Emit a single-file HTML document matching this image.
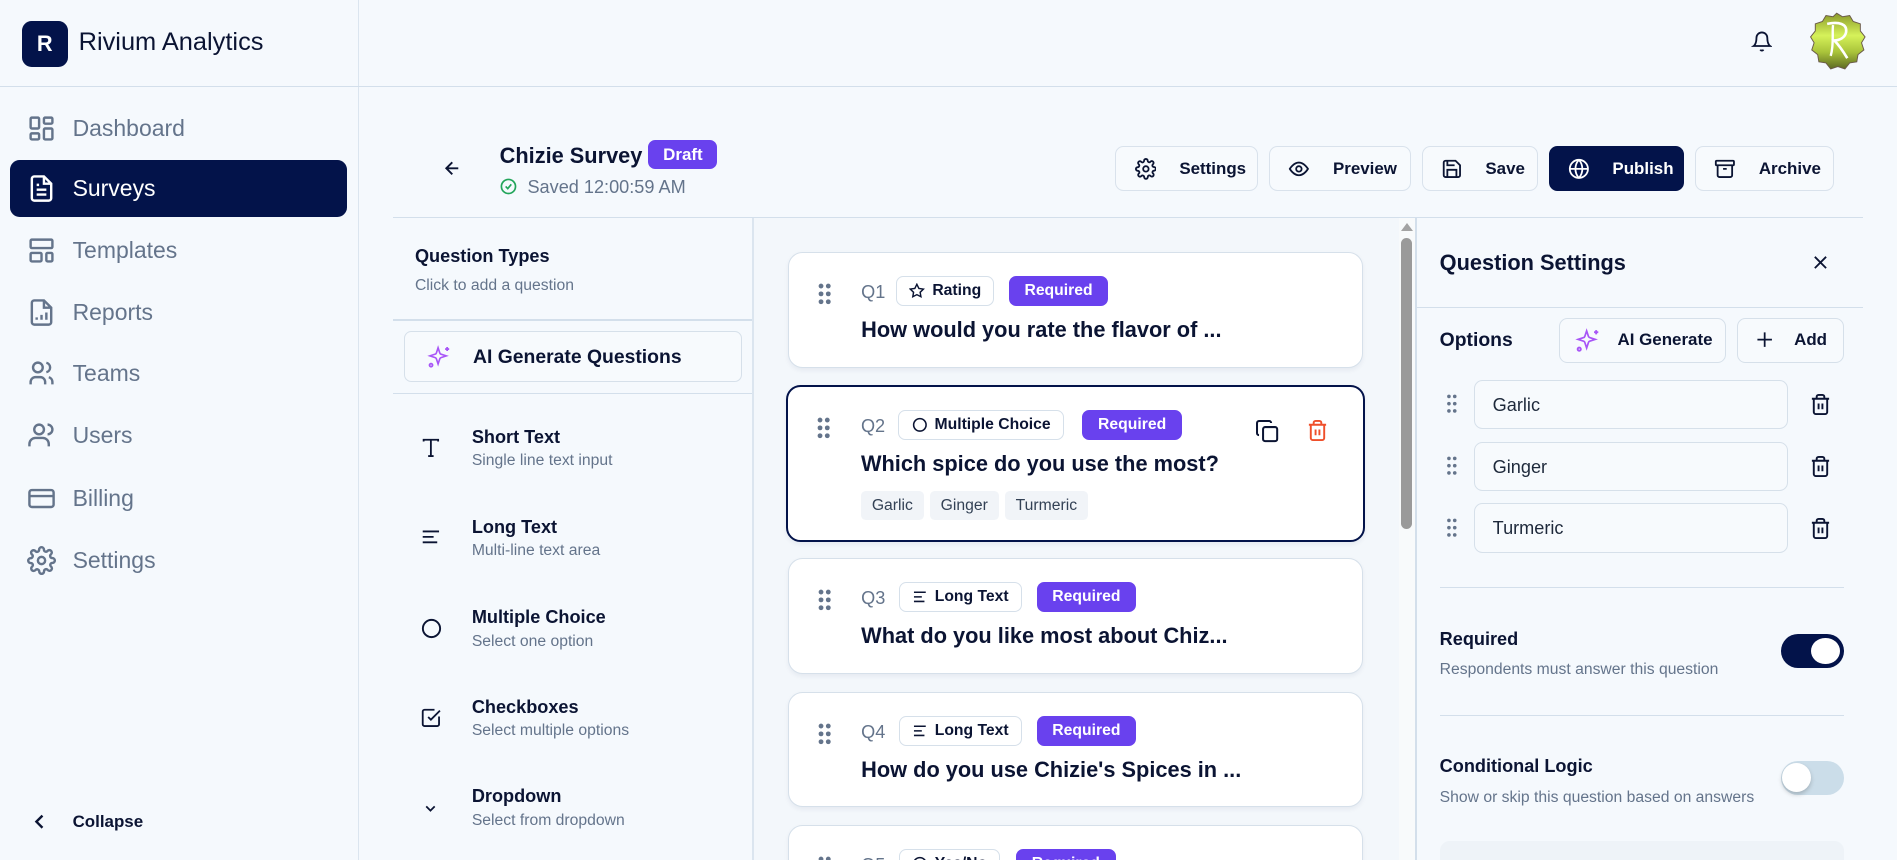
<!DOCTYPE html>
<html><head><meta charset="utf-8"><style>
*{box-sizing:border-box;margin:0;padding:0}
html,body{width:1897px;height:860px;overflow:hidden;background:#f5f9fd}
#r{zoom:1.2098;width:1568px;height:711px;position:relative;overflow:hidden;font-family:"Liberation Sans",sans-serif;color:#0b1433;background:#f5f9fd}
.a{position:absolute}
svg{display:block}
.nav{position:absolute;left:22px;display:flex;align-items:center;font-size:19px;color:#64748b}
.nav svg{margin-right:14px}
.btn{position:absolute;top:121px;height:37px;border:1px solid #d9e2ec;border-radius:7px;background:#f7fafd;display:flex;align-items:center;padding-left:15px;font-size:14px;font-weight:bold;color:#0b1433}
.btn svg{margin-right:19px}
.qt{position:absolute;left:347px}
.qt .t{position:absolute;left:43px;top:-17px;font-size:15px;font-weight:bold;white-space:nowrap}
.qt .s{position:absolute;left:43px;top:4px;font-size:13px;color:#64748b;white-space:nowrap}
.card{position:absolute;left:651px;width:476px;background:#fff;border:1px solid #d6e0ea;border-radius:12px;box-shadow:0 2px 4px rgba(15,40,80,.06)}
.dots{position:absolute;left:24px;top:25px}
.ql{position:absolute;left:60px;top:24px;font-size:15px;color:#64748b}
.tag{position:absolute;top:19px;height:25px;border:1px solid #d6e0ea;border-radius:6px;display:flex;align-items:center;padding:0 10px 0 10px;font-size:13px;font-weight:bold;white-space:nowrap}
.tag svg{margin-right:6px}
.req{position:absolute;top:19px;height:25px;background:#6941ee;color:#fff;border-radius:6px;font-size:13px;font-weight:bold;padding:0 13px;line-height:25px}
.qtitle{position:absolute;left:60px;top:53px;font-size:18px;font-weight:bold;white-space:nowrap}
.chip{display:inline-block;background:#f1f4f8;border-radius:4px;padding:0 9px;height:24px;line-height:24px;font-size:13px;color:#334155;margin-right:5px}
.inp{position:absolute;left:1218px;width:260px;height:41px;border:1px solid #d6e0ea;border-radius:7px;background:#f7fafd;font-size:15px;padding-left:15px;line-height:40px;color:#1e293b}
</style></head><body><div id="r">
<!-- sidebar -->
<div class="a" style="left:296px;top:0;width:1px;height:711px;background:#dbe5ef"></div>
<div class="a" style="left:0;top:71px;width:1568px;height:1px;background:#d3dfeb"></div>
<div class="a" style="left:18px;top:17px;width:38px;height:38px;background:#03134a;border-radius:8px;color:#fff;font-weight:bold;font-size:18px;text-align:center;line-height:38px">R</div>
<div class="a" style="left:65px;top:23px;font-size:21px;font-weight:500;color:#0b1433">Rivium Analytics</div>

<div class="nav" style="top:94px"><svg width="24" height="24" viewBox="0 0 24 24" fill="none" stroke="#64748b" stroke-width="2"><rect x="3" y="3" width="7" height="9" rx="1"/><rect x="14" y="3" width="7" height="5" rx="1"/><rect x="14" y="12" width="7" height="9" rx="1"/><rect x="3" y="16" width="7" height="5" rx="1"/></svg>Dashboard</div>
<div class="a" style="left:8px;top:132px;width:279px;height:47px;background:#03134a;border-radius:8px"></div>
<div class="nav" style="top:144px;color:#fff"><svg width="24" height="24" viewBox="0 0 24 24" fill="none" stroke="#fff" stroke-width="2"><path d="M14 2H6a2 2 0 0 0-2 2v16a2 2 0 0 0 2 2h12a2 2 0 0 0 2-2V8z"/><path d="M14 2v6h6M16 13H8M16 17H8M10 9H8"/></svg>Surveys</div>
<div class="nav" style="top:195px"><svg width="24" height="24" viewBox="0 0 24 24" fill="none" stroke="#64748b" stroke-width="2"><rect x="3" y="3" width="18" height="7" rx="1"/><rect x="3" y="14" width="9" height="7" rx="1"/><rect x="16" y="14" width="5" height="7" rx="1"/></svg>Templates</div>
<div class="nav" style="top:246px"><svg width="24" height="24" viewBox="0 0 24 24" fill="none" stroke="#64748b" stroke-width="2"><path d="M14 2H6a2 2 0 0 0-2 2v16a2 2 0 0 0 2 2h12a2 2 0 0 0 2-2V8z"/><path d="M14 2v6h6M8 18v-2M12 18v-4M16 18v-6"/></svg>Reports</div>
<div class="nav" style="top:297px"><svg width="24" height="24" viewBox="0 0 24 24" fill="none" stroke="#64748b" stroke-width="2"><circle cx="9" cy="7" r="4"/><path d="M3 21v-2a4 4 0 0 1 4-4h4a4 4 0 0 1 4 4v2M16 3.1a4 4 0 0 1 0 7.8M21 21v-2a4 4 0 0 0-3-3.9"/></svg>Teams</div>
<div class="nav" style="top:348px"><svg width="24" height="24" viewBox="0 0 24 24" fill="none" stroke="#64748b" stroke-width="2"><circle cx="10" cy="7" r="4"/><path d="M2 21v-2a5 5 0 0 1 5-5h6a5 5 0 0 1 5 5v2M17 3a4 4 0 0 1 0 8"/></svg>Users</div>
<div class="nav" style="top:400px"><svg width="24" height="24" viewBox="0 0 24 24" fill="none" stroke="#64748b" stroke-width="2"><rect x="2" y="5" width="20" height="14" rx="2"/><path d="M2 10h20"/></svg>Billing</div>
<div class="nav" style="top:451px"><svg width="24" height="24" viewBox="0 0 24 24" fill="none" stroke="#64748b" stroke-width="2"><circle cx="12" cy="12" r="3"/><path d="M19.4 15a1.7 1.7 0 0 0 .3 1.8l.1.1a2 2 0 1 1-2.8 2.8l-.1-.1a1.7 1.7 0 0 0-1.8-.3 1.7 1.7 0 0 0-1 1.5V21a2 2 0 1 1-4 0v-.1a1.7 1.7 0 0 0-1.1-1.5 1.7 1.7 0 0 0-1.8.3l-.1.1a2 2 0 1 1-2.8-2.8l.1-.1a1.7 1.7 0 0 0 .3-1.8 1.7 1.7 0 0 0-1.5-1H3a2 2 0 1 1 0-4h.1a1.7 1.7 0 0 0 1.5-1.1 1.7 1.7 0 0 0-.3-1.8l-.1-.1a2 2 0 1 1 2.8-2.8l.1.1a1.7 1.7 0 0 0 1.8.3H9a1.7 1.7 0 0 0 1-1.5V3a2 2 0 1 1 4 0v.1a1.7 1.7 0 0 0 1 1.5 1.7 1.7 0 0 0 1.8-.3l.1-.1a2 2 0 1 1 2.8 2.8l-.1.1a1.7 1.7 0 0 0-.3 1.8V9a1.7 1.7 0 0 0 1.5 1H21a2 2 0 1 1 0 4h-.1a1.7 1.7 0 0 0-1.5 1z"/></svg>Settings</div>
<div class="a" style="left:28px;top:671px"><svg width="10" height="16" viewBox="0 0 10 16" fill="none" stroke="#0b1433" stroke-width="2"><path d="M7 3L2 8l5 5"/></svg></div>
<div class="a" style="left:60px;top:671px;font-size:14px;font-weight:bold">Collapse</div>

<!-- top right -->
<div class="a" style="left:1447px;top:25px"><svg width="18" height="19" viewBox="0 0 24 24" fill="none" stroke="#0b1433" stroke-width="2"><path d="M6 8a6 6 0 0 1 12 0c0 7 3 9 3 9H3s3-2 3-9M10.3 21a1.9 1.9 0 0 0 3.4 0"/></svg></div>
<svg class="a" style="left:1494px;top:10px" width="49" height="49" viewBox="0 0 50 50"><defs><linearGradient id="gg" x1="0" y1="0" x2="0" y2="1"><stop offset="0" stop-color="#8a9a2a"/><stop offset=".4" stop-color="#d6f25a"/><stop offset=".7" stop-color="#a9c33a"/><stop offset="1" stop-color="#5d6a22"/></linearGradient></defs><path d="M25 1l5 3 6-1 3 5 6 2 0 6 4 5-3 5 2 6-5 4-1 6-6 1-4 5-6-2-6 2-4-5-6-1-1-6-5-4 2-6-3-5 4-5 0-6 6-2 3-5 6 1z" fill="url(#gg)" stroke="#6a5a4a" stroke-width=".8"/><path d="M17 10c10-2 17 0 16 7-1 5-6 7-10 7 4 4 8 10 11 15" fill="none" stroke="#fff" stroke-width="2.2"/><path d="M22 11c-1 6 1 16-2 26" fill="none" stroke="#fff" stroke-width="2"/></svg>

<!-- main panel -->
<div class="a" style="left:325px;top:179px;width:1215px;height:1px;background:#d3dfeb"></div>
<div class="a" style="left:365px;top:131px"><svg width="17" height="17" viewBox="0 0 24 24" fill="none" stroke="#0b1433" stroke-width="2.2"><path d="M19 12H5M12 19l-7-7 7-7"/></svg></div>
<div class="a" style="left:413px;top:118px;font-size:18px;font-weight:bold">Chizie Survey</div>
<div class="a" style="left:536px;top:116px;width:57px;height:24px;background:#6941ee;border-radius:6px;color:#fff;font-size:14px;font-weight:bold;text-align:center;line-height:24px">Draft</div>
<div class="a" style="left:413px;top:147px"><svg width="14" height="14" viewBox="0 0 24 24" fill="none" stroke="#22a55a" stroke-width="2.4"><circle cx="12" cy="12" r="10"/><path d="M8 12l3 3 5-6"/></svg></div>
<div class="a" style="left:436px;top:146px;font-size:15px;color:#64748b">Saved 12:00:59 AM</div>

<div class="btn" style="left:922px;width:118px"><svg width="18" height="18" viewBox="0 0 24 24" fill="none" stroke="#0b1433" stroke-width="2"><circle cx="12" cy="12" r="3"/><path d="M19.4 15a1.7 1.7 0 0 0 .3 1.8l.1.1a2 2 0 1 1-2.8 2.8l-.1-.1a1.7 1.7 0 0 0-1.8-.3 1.7 1.7 0 0 0-1 1.5V21a2 2 0 1 1-4 0v-.1a1.7 1.7 0 0 0-1.1-1.5 1.7 1.7 0 0 0-1.8.3l-.1.1a2 2 0 1 1-2.8-2.8l.1-.1a1.7 1.7 0 0 0 .3-1.8 1.7 1.7 0 0 0-1.5-1H3a2 2 0 1 1 0-4h.1a1.7 1.7 0 0 0 1.5-1.1 1.7 1.7 0 0 0-.3-1.8l-.1-.1a2 2 0 1 1 2.8-2.8l.1.1a1.7 1.7 0 0 0 1.8.3H9a1.7 1.7 0 0 0 1-1.5V3a2 2 0 1 1 4 0v.1a1.7 1.7 0 0 0 1 1.5 1.7 1.7 0 0 0 1.8-.3l.1-.1a2 2 0 1 1 2.8 2.8l-.1.1a1.7 1.7 0 0 0-.3 1.8V9a1.7 1.7 0 0 0 1.5 1H21a2 2 0 1 1 0 4h-.1a1.7 1.7 0 0 0-1.5 1z"/></svg>Settings</div>
<div class="btn" style="left:1049px;width:117px"><svg width="18" height="18" viewBox="0 0 24 24" fill="none" stroke="#0b1433" stroke-width="2"><path d="M2 12s4-7 10-7 10 7 10 7-4 7-10 7S2 12 2 12z"/><circle cx="12" cy="12" r="3"/></svg>Preview</div>
<div class="btn" style="left:1175px;width:96px"><svg width="18" height="18" viewBox="0 0 24 24" fill="none" stroke="#0b1433" stroke-width="2"><path d="M19 21H5a2 2 0 0 1-2-2V5a2 2 0 0 1 2-2h11l5 5v11a2 2 0 0 1-2 2z"/><path d="M17 21v-8H7v8M7 3v5h8"/></svg>Save</div>
<div class="btn" style="left:1280px;width:112px;background:#03134a;border-color:#03134a;color:#fff"><svg width="18" height="18" viewBox="0 0 24 24" fill="none" stroke="#fff" stroke-width="2"><circle cx="12" cy="12" r="10"/><path d="M2 12h20M12 2a15 15 0 0 1 0 20M12 2a15 15 0 0 0 0 20"/></svg>Publish</div>
<div class="btn" style="left:1401px;width:115px"><svg width="18" height="18" viewBox="0 0 24 24" fill="none" stroke="#0b1433" stroke-width="2"><rect x="2" y="3" width="20" height="5" rx="1"/><path d="M4 8v11a2 2 0 0 0 2 2h12a2 2 0 0 0 2-2V8M10 12h4"/></svg>Archive</div>

<!-- left column -->
<div class="a" style="left:622px;top:180px;width:1px;height:531px;background:#dbe5ef"></div>
<div class="a" style="left:343px;top:203px;font-size:15px;font-weight:bold">Question Types</div>
<div class="a" style="left:343px;top:229px;font-size:13px;color:#64748b">Click to add a question</div>
<div class="a" style="left:325px;top:264px;width:297px;height:1px;background:#d3dfeb"></div>
<div class="a" style="left:334px;top:274px;width:279px;height:42px;border:1px solid #d6e0ea;border-radius:6px;background:#f7fafd"></div>
<div class="a" style="left:353px;top:285px"><svg width="20" height="20" viewBox="0 0 24 24" fill="none" stroke="#a855f7" stroke-width="1.8"><path d="M10 3l1.9 5.8a2 2 0 0 0 1.3 1.3L19 12l-5.8 1.9a2 2 0 0 0-1.3 1.3L10 21l-1.9-5.8a2 2 0 0 0-1.3-1.3L1 12l5.8-1.9a2 2 0 0 0 1.3-1.3z" transform="translate(2 0) scale(.9)"/><path d="M20 2v4M22 4h-4"/><circle cx="4" cy="20" r="1.5"/></svg></div>
<div class="a" style="left:391px;top:286px;font-size:16px;font-weight:bold">AI Generate Questions</div>
<div class="a" style="left:325px;top:325px;width:297px;height:1px;background:#d3dfeb"></div>

<div class="qt" style="top:370px"><svg class="a" style="left:0;top:-9px" width="18" height="18" viewBox="0 0 24 24" fill="none" stroke="#0b1433" stroke-width="2"><path d="M4 5V3h16v2M12 3v18M9 21h6"/></svg><div class="t">Short Text</div><div class="s">Single line text input</div></div>
<div class="qt" style="top:444px"><svg class="a" style="left:0;top:-9px" width="18" height="18" viewBox="0 0 24 24" fill="none" stroke="#0b1433" stroke-width="2"><path d="M3 6h18M3 12h12M3 18h16"/></svg><div class="t">Long Text</div><div class="s">Multi-line text area</div></div>
<div class="qt" style="top:519px"><svg class="a" style="left:0;top:-9px" width="19" height="19" viewBox="0 0 24 24" fill="none" stroke="#0b1433" stroke-width="2"><circle cx="12" cy="12" r="9"/></svg><div class="t">Multiple Choice</div><div class="s">Select one option</div></div>
<div class="qt" style="top:593px"><svg class="a" style="left:0;top:-9px" width="18" height="18" viewBox="0 0 24 24" fill="none" stroke="#0b1433" stroke-width="2"><path d="M21 10.5V19a2 2 0 0 1-2 2H5a2 2 0 0 1-2-2V5a2 2 0 0 1 2-2h11"/><path d="M9 11l3 3L22 4"/></svg><div class="t">Checkboxes</div><div class="s">Select multiple options</div></div>
<div class="qt" style="top:667px"><svg class="a" style="left:2px;top:-6px" width="14" height="14" viewBox="0 0 24 24" fill="none" stroke="#0b1433" stroke-width="2.5"><path d="M6 9l6 6 6-6"/></svg><div class="t">Dropdown</div><div class="s">Select from dropdown</div></div>

<!-- middle -->
<div class="a" style="left:623px;top:180px;width:546px;height:531px;background:#f3f7fb"></div>
<div class="a" style="left:1156px;top:180px;width:14px;height:531px;background:#f8fafb"></div>
<div class="a" style="left:1158px;top:184px;width:0;height:0;border-left:5px solid transparent;border-right:5px solid transparent;border-bottom:7px solid #a3a3a3"></div>
<div class="a" style="left:1158px;top:197px;width:9px;height:240px;background:#9a9a9a;border-radius:5px"></div>
<div class="a" style="left:1170px;top:180px;width:1px;height:531px;background:#d3dfeb"></div>

<svg width="0" height="0" style="position:absolute"><defs><g id="dd" fill="#64748b"><circle cx="2.5" cy="2.5" r="2"/><circle cx="8.5" cy="2.5" r="2"/><circle cx="2.5" cy="9" r="2"/><circle cx="8.5" cy="9" r="2"/><circle cx="2.5" cy="15.5" r="2"/><circle cx="8.5" cy="15.5" r="2"/></g></defs></svg>

<div class="card" style="top:208px;height:96px">
<svg class="dots" width="11" height="18"><use href="#dd"/></svg>
<div class="ql">Q1</div>
<div class="tag" style="left:89px"><svg width="13" height="13" viewBox="0 0 24 24" fill="none" stroke="#0b1433" stroke-width="2.2"><path d="M12 2l3.1 6.3 6.9 1-5 4.9 1.2 6.8L12 17.8 5.8 21l1.2-6.8-5-4.9 6.9-1z"/></svg>Rating</div>
<div class="req" style="left:182px">Required</div>
<div class="qtitle">How would you rate the flavor of ...</div>
</div>

<div class="card" style="top:318px;height:130px;border:2px solid #03134a;left:650px;width:478px">
<svg class="dots" width="11" height="18"><use href="#dd"/></svg>
<div class="ql">Q2</div>
<div class="tag" style="left:91px"><svg width="13" height="13" viewBox="0 0 24 24" fill="none" stroke="#0b1433" stroke-width="2.4"><circle cx="12" cy="12" r="9.5"/></svg>Multiple Choice</div>
<div class="req" style="left:243px">Required</div>
<svg class="a" style="left:386px;top:27px" width="20" height="20" viewBox="0 0 24 24" fill="none" stroke="#0b1433" stroke-width="2"><rect x="8" y="8" width="14" height="14" rx="2"/><path d="M4 16c-1.1 0-2-.9-2-2V4c0-1.1.9-2 2-2h10c1.1 0 2 .9 2 2"/></svg>
<svg class="a" style="left:428px;top:27px" width="19" height="19" viewBox="0 0 24 24" fill="none" stroke="#ef4f2a" stroke-width="2"><path d="M3 6h18M19 6v14a2 2 0 0 1-2 2H7a2 2 0 0 1-2-2V6M8 6V4a2 2 0 0 1 2-2h4a2 2 0 0 1 2 2v2M10 11v6M14 11v6"/></svg>
<div class="qtitle">Which spice do you use the most?</div>
<div class="a" style="left:60px;top:86px;white-space:nowrap"><span class="chip">Garlic</span><span class="chip">Ginger</span><span class="chip">Turmeric</span></div>
</div>

<div class="card" style="top:461px;height:96px">
<svg class="dots" width="11" height="18"><use href="#dd"/></svg>
<div class="ql">Q3</div>
<div class="tag" style="left:91px"><svg width="13" height="13" viewBox="0 0 24 24" fill="none" stroke="#0b1433" stroke-width="2.4"><path d="M3 5h18M3 12h12M3 19h16"/></svg>Long Text</div>
<div class="req" style="left:205px">Required</div>
<div class="qtitle">What do you like most about Chiz...</div>
</div>

<div class="card" style="top:572px;height:95px">
<svg class="dots" width="11" height="18"><use href="#dd"/></svg>
<div class="ql">Q4</div>
<div class="tag" style="left:91px"><svg width="13" height="13" viewBox="0 0 24 24" fill="none" stroke="#0b1433" stroke-width="2.4"><path d="M3 5h18M3 12h12M3 19h16"/></svg>Long Text</div>
<div class="req" style="left:205px">Required</div>
<div class="qtitle">How do you use Chizie's Spices in ...</div>
</div>

<div class="card" style="top:682px;height:60px">
<svg class="dots" width="11" height="18"><use href="#dd"/></svg>
<div class="ql">Q5</div>
<div class="tag" style="left:91px"><svg width="13" height="13" viewBox="0 0 24 24" fill="none" stroke="#0b1433" stroke-width="2.4"><circle cx="12" cy="12" r="9.5"/></svg>Yes/No</div>
<div class="req" style="left:188px">Required</div>
</div>

<!-- right panel -->
<div class="a" style="left:1190px;top:207px;font-size:18px;font-weight:bold">Question Settings</div>
<svg class="a" style="left:1498px;top:210px" width="14" height="14" viewBox="0 0 24 24" fill="none" stroke="#0b1433" stroke-width="2.6"><path d="M4 4l16 16M20 4L4 20"/></svg>
<div class="a" style="left:1171px;top:254px;width:369px;height:1px;background:#d3dfeb"></div>
<div class="a" style="left:1190px;top:272px;font-size:16px;font-weight:bold">Options</div>
<div class="a" style="left:1289px;top:263px;width:138px;height:37px;border:1px solid #d6e0ea;border-radius:7px;background:#f7fafd"></div>
<div class="a" style="left:1302px;top:271px"><svg width="21" height="21" viewBox="0 0 24 24" fill="none" stroke="#a855f7" stroke-width="1.8"><path d="M10 3l1.9 5.8a2 2 0 0 0 1.3 1.3L19 12l-5.8 1.9a2 2 0 0 0-1.3 1.3L10 21l-1.9-5.8a2 2 0 0 0-1.3-1.3L1 12l5.8-1.9a2 2 0 0 0 1.3-1.3z" transform="translate(2 0) scale(.9)"/><path d="M20 2v4M22 4h-4"/><circle cx="4" cy="20" r="1.5"/></svg></div>
<div class="a" style="left:1337px;top:273px;font-size:14px;font-weight:bold">AI Generate</div>
<div class="a" style="left:1436px;top:263px;width:88px;height:37px;border:1px solid #d6e0ea;border-radius:7px;background:#f7fafd"></div>
<svg class="a" style="left:1451px;top:273px" width="16" height="16" viewBox="0 0 24 24" fill="none" stroke="#0b1433" stroke-width="2.2"><path d="M12 3v18M3 12h18"/></svg>
<div class="a" style="left:1483px;top:273px;font-size:14px;font-weight:bold">Add</div>

<svg class="a" style="left:1196px;top:326px" width="8" height="16"><g fill="#64748b"><circle cx="1.6" cy="2" r="1.5"/><circle cx="6.4" cy="2" r="1.5"/><circle cx="1.6" cy="8" r="1.5"/><circle cx="6.4" cy="8" r="1.5"/><circle cx="1.6" cy="14" r="1.5"/><circle cx="6.4" cy="14" r="1.5"/></g></svg>
<div class="inp" style="top:314px">Garlic</div>
<svg class="a" style="left:1495px;top:325px" width="19" height="19" viewBox="0 0 24 24" fill="none" stroke="#0b1433" stroke-width="2"><path d="M3 6h18M19 6v14a2 2 0 0 1-2 2H7a2 2 0 0 1-2-2V6M8 6V4a2 2 0 0 1 2-2h4a2 2 0 0 1 2 2v2M10 11v6M14 11v6"/></svg>
<svg class="a" style="left:1196px;top:377px" width="8" height="16"><g fill="#64748b"><circle cx="1.6" cy="2" r="1.5"/><circle cx="6.4" cy="2" r="1.5"/><circle cx="1.6" cy="8" r="1.5"/><circle cx="6.4" cy="8" r="1.5"/><circle cx="1.6" cy="14" r="1.5"/><circle cx="6.4" cy="14" r="1.5"/></g></svg>
<div class="inp" style="top:365px">Ginger</div>
<svg class="a" style="left:1495px;top:376px" width="19" height="19" viewBox="0 0 24 24" fill="none" stroke="#0b1433" stroke-width="2"><path d="M3 6h18M19 6v14a2 2 0 0 1-2 2H7a2 2 0 0 1-2-2V6M8 6V4a2 2 0 0 1 2-2h4a2 2 0 0 1 2 2v2M10 11v6M14 11v6"/></svg>
<svg class="a" style="left:1196px;top:428px" width="8" height="16"><g fill="#64748b"><circle cx="1.6" cy="2" r="1.5"/><circle cx="6.4" cy="2" r="1.5"/><circle cx="1.6" cy="8" r="1.5"/><circle cx="6.4" cy="8" r="1.5"/><circle cx="1.6" cy="14" r="1.5"/><circle cx="6.4" cy="14" r="1.5"/></g></svg>
<div class="inp" style="top:416px">Turmeric</div>
<svg class="a" style="left:1495px;top:427px" width="19" height="19" viewBox="0 0 24 24" fill="none" stroke="#0b1433" stroke-width="2"><path d="M3 6h18M19 6v14a2 2 0 0 1-2 2H7a2 2 0 0 1-2-2V6M8 6V4a2 2 0 0 1 2-2h4a2 2 0 0 1 2 2v2M10 11v6M14 11v6"/></svg>

<div class="a" style="left:1190px;top:485px;width:334px;height:1px;background:#d3dfeb"></div>
<div class="a" style="left:1190px;top:520px;font-size:15px;font-weight:bold">Required</div>
<div class="a" style="left:1190px;top:546px;font-size:13px;color:#64748b">Respondents must answer this question</div>
<div class="a" style="left:1472px;top:524px;width:52px;height:28px;background:#03134a;border-radius:14px"></div>
<div class="a" style="left:1497px;top:527px;width:24px;height:22px;background:#fff;border-radius:50%"></div>
<div class="a" style="left:1190px;top:591px;width:334px;height:1px;background:#d3dfeb"></div>
<div class="a" style="left:1190px;top:625px;font-size:15px;font-weight:bold">Conditional Logic</div>
<div class="a" style="left:1190px;top:652px;font-size:13px;color:#64748b">Show or skip this question based on answers</div>
<div class="a" style="left:1472px;top:629px;width:52px;height:28px;background:#cbdde9;border-radius:14px"></div>
<div class="a" style="left:1473px;top:631px;width:24px;height:24px;background:#fff;border-radius:50%;box-shadow:0 2px 4px rgba(0,0,0,.2)"></div>
<div class="a" style="left:1190px;top:695px;width:334px;height:30px;background:#eef3f8;border-radius:8px"></div>
</div></body></html>
